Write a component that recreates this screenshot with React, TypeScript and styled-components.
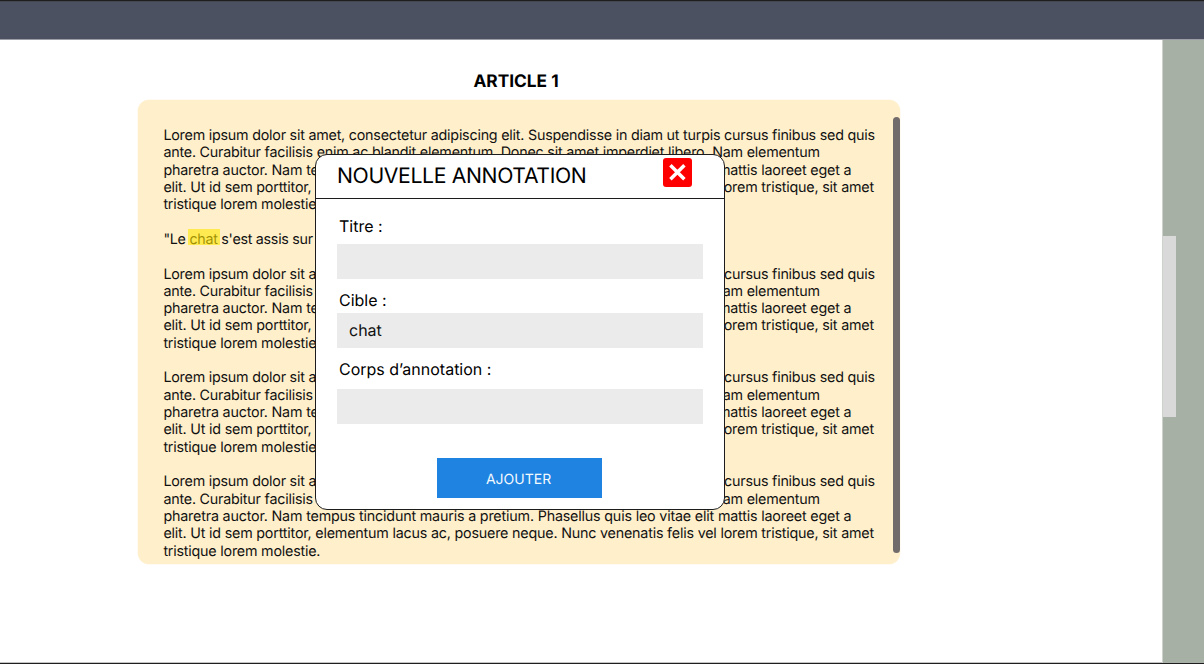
import React from "react";
import styled, { createGlobalStyle } from "styled-components";

const GlobalStyle = createGlobalStyle`
  * { box-sizing: border-box; }
  body {
    margin: 0;
    background: #fff;
    color: #000;
    font-family: Inter, "Liberation Sans", sans-serif;
    text-rendering: geometricPrecision;
    overflow: hidden;
  }
  h1, h2, p { margin: 0; font-weight: 400; }
`;

const Page = styled.div`
  display: flex;
  flex-direction: column;
  width: 1204px;
  height: 664px;
  border-bottom: 1px solid #1e1e1e;
`;

const TopBar = styled.header`
  flex: none;
  height: 40px;
  background: #4c5161;
  border-top: 1px solid #1e1e1e;
  border-bottom: 1px solid #9b9ea6;
  box-shadow: inset 0 1px 0 #444650;
`;

const Body = styled.div`
  flex: 1;
  min-height: 0;
  display: flex;
  box-shadow: inset 0 -1px 0 #c4c4c4;
`;

const Main = styled.main`
  width: 1162px;
  padding: 30px 0 0 138px;
`;

const SideRail = styled.aside`
  flex: 1;
  padding-top: 196px;
  border-left: 1px solid #cdd3cc;
  background: #a6b0a4;
`;

const RailHandle = styled.div`
  width: 13px;
  height: 181px;
  background: #d9d9d9;
`;

const ArticleTitle = styled.h1`
  width: 756px;
  height: 30px;
  font-size: 17.3px;
  font-weight: 700;
  line-height: 23px;
  text-align: center;
`;

const Card = styled.article`
  display: flex;
  justify-content: space-between;
  width: 762px;
  height: 464px;
  padding-left: 25.4px;
  border-radius: 11px;
  background: #ffefcb;
  box-shadow: 0 0 0 0.5px #fff7e5;
`;

const Copy = styled.div`
  padding-top: 27px;
`;

const Paragraph = styled.p`
  margin-bottom: 17.32px;
  color: #111;
  font-size: 14.3px;
  line-height: 17.32px;
  white-space: nowrap;
`;

const Line = styled.span<{ $tracking: number }>`
  display: block;
  letter-spacing: ${(p) => p.$tracking}px;
`;

const Highlight = styled.mark`
  position: relative;
  color: inherit;
  background: none;

  &::after {
    content: "";
    position: absolute;
    left: -1px;
    top: -2px;
    width: 32px;
    height: 16px;
    background: rgba(255, 230, 0, 0.6);
  }
`;

const ScrollThumb = styled.div`
  flex: none;
  width: 7px;
  height: 436px;
  margin-top: 17px;
  border-radius: 4px;
  background: #716b6b;
`;

const Dialog = styled.section`
  position: absolute;
  left: 315px;
  top: 154px;
  width: 409.5px;
  height: 356px;
  display: flex;
  flex-direction: column;
  border: 1px solid #1c1c1c;
  border-radius: 12px;
  background: #fff;
`;

const DialogHeader = styled.header`
  flex: none;
  display: flex;
  justify-content: space-between;
  height: 44px;
  padding: 3px 32px 0 21px;
  border-bottom: 1px solid #1c1c1c;
`;

const DialogTitle = styled.h2`
  font-size: 21.2px;
  line-height: 36px;
  letter-spacing: -0.36px;
  white-space: nowrap;
`;

const CloseButton = styled.button`
  width: 29px;
  height: 29px;
  padding: 0;
  border: 0;
  border-radius: 3px;
  background: #f00;

  svg { display: block; }
`;

const Form = styled.form`
  flex: 1;
  display: flex;
  flex-direction: column;
  padding: 17px 21px 12px 20.6px;
`;

const Field = styled.label<{ $labelHeight: number; $after: number }>`
  display: grid;
  grid-template-rows: ${(p) => p.$labelHeight}px 34.5px;
  margin-bottom: ${(p) => p.$after}px;
`;

const FieldLabel = styled.span`
  padding-left: 2.4px;
  font-size: 16px;
  line-height: 20px;
`;

const Input = styled.input`
  width: 366.4px;
  height: 34.5px;
  padding: 0 12.4px;
  border: 0;
  background: #ebebeb;
  color: #111;
  font: 16px Inter, sans-serif;
  text-rendering: inherit;
`;

const SubmitButton = styled.button`
  align-self: center;
  width: 165px;
  height: 39.5px;
  padding: 3px 2px 0 0;
  border: 0;
  background: #1e83e1;
  color: #f4f9fe;
  font: 14px Inter, sans-serif;
  text-rendering: inherit;
`;

const LOREM = [
  { tracking: -0.222, text: "Lorem ipsum dolor sit amet, consectetur adipiscing elit. Suspendisse in diam ut turpis cursus finibus sed quis" },
  { tracking: -0.213, text: "ante. Curabitur facilisis enim ac blandit elementum. Donec sit amet imperdiet libero. Nam elementum" },
  { tracking: -0.182, text: "pharetra auctor. Nam tempus tincidunt mauris a pretium. Phasellus quis leo vitae elit mattis laoreet eget a" },
  { tracking: -0.197, text: "elit. Ut id sem porttitor, elementum lacus ac, posuere neque. Nunc venenatis felis vel lorem tristique, sit amet" },
  { tracking: -0.21, text: "tristique lorem molestie." },
];

function LoremParagraph() {
  return (
    <Paragraph>
      {LOREM.map((line) => (
        <Line key={line.text} $tracking={line.tracking}>{line.text}</Line>
      ))}
    </Paragraph>
  );
}

export default function App() {
  return (
    <>
      <GlobalStyle />
      <Page>
        <TopBar />
        <Body>
          <Main>
            <ArticleTitle>ARTICLE 1</ArticleTitle>
            <Card>
              <Copy>
                <LoremParagraph />
                <Paragraph>
                  <Line $tracking={-0.28}>
                    "Le <Highlight>chat</Highlight> s'est assis sur le tapis."
                  </Line>
                </Paragraph>
                <LoremParagraph />
                <LoremParagraph />
                <LoremParagraph />
              </Copy>
              <ScrollThumb />
            </Card>
          </Main>
          <SideRail>
            <RailHandle />
          </SideRail>
        </Body>
      </Page>
      <Dialog role="dialog">
        <DialogHeader>
          <DialogTitle>NOUVELLE ANNOTATION</DialogTitle>
          <CloseButton type="button" aria-label="Fermer">
            <svg width="29" height="29" viewBox="0 0 29 29" fill="none" stroke="#fff" strokeWidth="3.5">
              <path d="M7.4 7.2 21.4 21.2M21.4 7.2 7.4 21.2" />
            </svg>
          </CloseButton>
        </DialogHeader>
        <Form>
          <Field $labelHeight={28} $after={11.5}>
            <FieldLabel>Titre :</FieldLabel>
            <Input />
          </Field>
          <Field $labelHeight={23} $after={11.5}>
            <FieldLabel>Cible :</FieldLabel>
            <Input defaultValue="chat" />
          </Field>
          <Field $labelHeight={30} $after={34.5}>
            <FieldLabel>Corps d’annotation :</FieldLabel>
            <Input />
          </Field>
          <SubmitButton type="button">AJOUTER</SubmitButton>
        </Form>
      </Dialog>
    </>
  );
}
